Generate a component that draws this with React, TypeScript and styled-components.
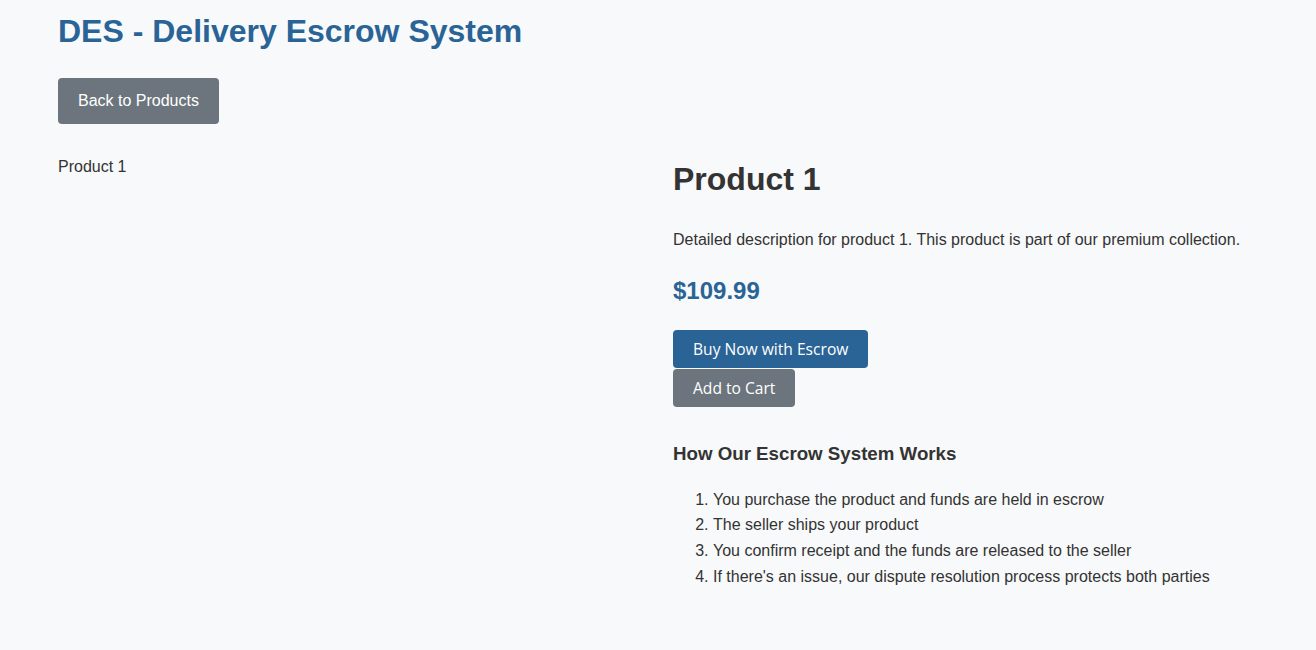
import React from "react";
import styled, { createGlobalStyle } from "styled-components";

const GlobalStyle = createGlobalStyle`
  html, body { margin: 0; padding: 0; }
  body {
    background: #f8f9fa;
    color: #333;
    font-family: "Liberation Sans", Arial, sans-serif;
    font-size: 16px;
    line-height: 1.6;
  }
`;

const Container = styled.div`
  max-width: 1200px;
  margin: 0 auto;
  padding-top: 6px;
`;

const Title = styled.h1`
  margin: 0 0 21px;
  font-size: 32px;
  font-weight: 700;
  color: #2a6496;
`;

const LinkButton = styled.a`
  display: inline-block;
  padding: 10px 20px;
  background: #6c757d;
  color: #fff;
  border-radius: 4px;
  text-decoration: none;
  margin-bottom: 30px;
`;

const Grid = styled.div`
  display: grid;
  grid-template-columns: 1fr 1fr;
  gap: 30px;
`;

const ImageAlt = styled.div`
  font-size: 16px;
`;

const Details = styled.div`
  display: flex;
  flex-direction: column;
  align-items: flex-start;
`;

const Name = styled.h2`
  margin: 0 0 22px;
  font-size: 32px;
  font-weight: 700;
`;

const Description = styled.p`
  margin: 0 0 19px;
`;

const Price = styled.div`
  font-size: 24px;
  font-weight: 700;
  color: #2a6496;
  margin-bottom: 20px;
`;

const Actions = styled.div`
  display: flex;
  flex-direction: column;
  align-items: flex-start;
  gap: 1px;
`;

const ActionButton = styled.button<{ $variant: "primary" | "secondary" }>`
  border: none;
  border-radius: 4px;
  padding: 10px 20px;
  font-family: "Open Sans", "Noto Sans", sans-serif;
  font-size: 15.6px;
  line-height: 18px;
  color: #fff;
  cursor: pointer;
  background: ${(p) => (p.$variant === "primary" ? "#2a6496" : "#6c757d")};
`;

const InfoTitle = styled.h3`
  margin: 32px 0 18px;
  font-size: 18.72px;
  font-weight: 700;
`;

const Steps = styled.ol`
  margin: 0;
  padding-left: 40px;
`;

export default function App() {
  return (
    <>
      <GlobalStyle />
      <Container>
        <Title>DES - Delivery Escrow System</Title>
        <LinkButton href="#">Back to Products</LinkButton>
        <Grid>
          <ImageAlt>Product 1</ImageAlt>
          <Details>
            <Name>Product 1</Name>
            <Description>
              Detailed description for product 1. This product is part of our premium collection.
            </Description>
            <Price>$109.99</Price>
            <Actions>
              <ActionButton $variant="primary">Buy Now with Escrow</ActionButton>
              <ActionButton $variant="secondary">Add to Cart</ActionButton>
            </Actions>
            <div>
              <InfoTitle>How Our Escrow System Works</InfoTitle>
              <Steps>
                <li>You purchase the product and funds are held in escrow</li>
                <li>The seller ships your product</li>
                <li>You confirm receipt and the funds are released to the seller</li>
                <li>If there's an issue, our dispute resolution process protects both parties</li>
              </Steps>
            </div>
          </Details>
        </Grid>
      </Container>
    </>
  );
}
